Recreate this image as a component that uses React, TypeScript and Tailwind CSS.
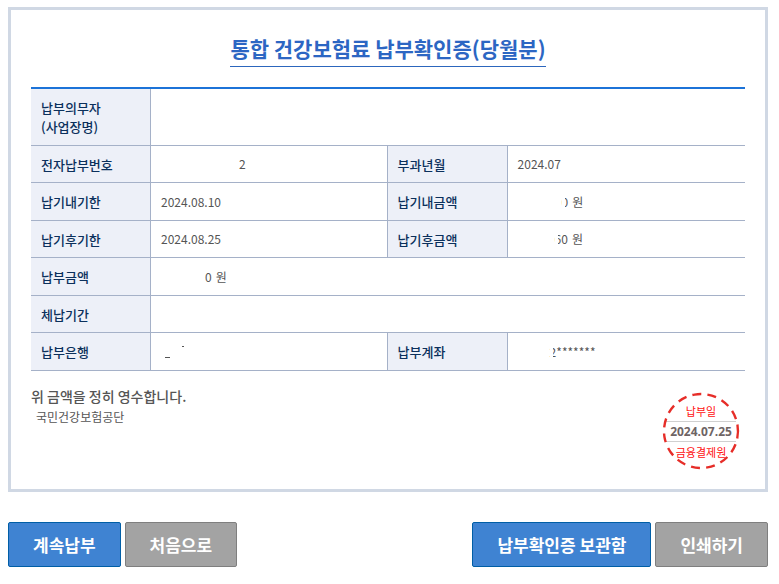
import type { ReactNode } from "react";
import clsx from "clsx";

const buttonStyles = {
  primary: "border-[#005ea6] bg-[#3f83d2]",
  neutral: "border-[#7f7f7f] bg-[#a3a3a3]",
};

function ActionButton({ variant, children }: { variant: keyof typeof buttonStyles; children: ReactNode }) {
  return (
    <button
      type="button"
      className={clsx("h-[45px] rounded-[2px] border px-6 text-[17px] font-bold text-white", buttonStyles[variant])}
    >
      {children}
    </button>
  );
}

function Label({ second, children }: { second?: boolean; children: ReactNode }) {
  return (
    <th
      scope="row"
      className={clsx(
        "border-r border-b border-[#a5b1c8] bg-[#edf0f8] px-[10px] text-left text-[13px] leading-[19px] font-medium text-[#0b305c]",
        second && "border-l",
      )}
    >
      {children}
    </th>
  );
}

function Value({ wide, children }: { wide?: boolean; children?: ReactNode }) {
  return (
    <td colSpan={wide ? 3 : 1} className="border-b border-[#a5b1c8] px-[10px] text-[12px] leading-[18px] text-[#555]">
      {children}
    </td>
  );
}

// Digit whose left half is hidden by the privacy mask
function MaskedDigit({ children }: { children: ReactNode }) {
  return (
    <span className="relative inline-block">
      {children}
      <span className="absolute inset-y-0 left-0 w-[3px] bg-white" />
    </span>
  );
}

const dashes = "14 6 " + "9 6.18 ".repeat(14);

function Stamp() {
  return (
    <div className="relative grid h-[78px] w-[78px] shrink-0 place-items-center text-center text-[11px] text-[#ff1010]">
      <svg className="absolute inset-0" width="78" height="78" viewBox="0 0 78 78" fill="none" aria-hidden="true">
        <circle
          cx="39"
          cy="39"
          r="37"
          stroke="#e62d28"
          strokeWidth="2.4"
          strokeDasharray={dashes}
          transform="rotate(-10 39 39)"
        />
      </svg>
      <div className="w-[70px] leading-[20px]">
        <p>납부일</p>
        <p className="border-y border-[#d0d0d0] font-['Open_Sans'] text-[12px] leading-[19px] font-bold text-[#6e6464]">
          2024.07.25
        </p>
        <p>금융결제원</p>
      </div>
    </div>
  );
}

export default function App() {
  return (
    <main className="bg-white pt-[7px] pr-[11px] pb-4 pl-2 font-['Noto_Sans_CJK_KR',sans-serif] text-[#555]">
      <section className="border-[3px] border-[#d0d8e4] px-5 pt-[22px] pb-[19px]">
        <div className="text-center">
          <h1 className="inline-block border-b border-[#2c66bd] pb-[2px] text-[21px] leading-[32px] font-bold text-[#2c66c3]">
            통합 건강보험료 납부확인증(당월분)
          </h1>
        </div>

        <table className="mt-5 w-full table-fixed border-separate border-spacing-0 border-t-2 border-[#1c73d8]">
          <colgroup>
            <col className="w-[120px]" />
            <col className="w-[33%]" />
            <col className="w-[121px]" />
            <col />
          </colgroup>
          <tbody>
            <tr className="h-[57px]">
              <Label>
                납부의무자
                <br />
                (사업장명)
              </Label>
              <Value wide />
            </tr>
            <tr className="h-[37px]">
              <Label>전자납부번호</Label>
              <Value>
                <span className="block pl-[78px]">2</span>
              </Value>
              <Label second>부과년월</Label>
              <Value>2024.07</Value>
            </tr>
            <tr className="h-[38px]">
              <Label>납기내기한</Label>
              <Value>2024.08.10</Value>
              <Label second>납기내금액</Label>
              <Value>
                <span className="flex gap-1 pl-11">
                  <MaskedDigit>0</MaskedDigit>원
                </span>
              </Value>
            </tr>
            <tr className="h-[37px]">
              <Label>납기후기한</Label>
              <Value>2024.08.25</Value>
              <Label second>납기후금액</Label>
              <Value>
                <span className="flex gap-1 pl-[37px]">
                  <span>
                    <MaskedDigit>6</MaskedDigit>0
                  </span>
                  원
                </span>
              </Value>
            </tr>
            <tr className="h-[38px]">
              <Label>납부금액</Label>
              <Value wide>
                <span className="flex gap-1 pl-11">
                  <span>0</span>원
                </span>
              </Value>
            </tr>
            <tr className="h-[37px]">
              <Label>체납기간</Label>
              <Value wide />
            </tr>
            <tr className="h-[38px]">
              <Label>납부은행</Label>
              <Value>
                <span className="flex h-3 items-end gap-3 pl-1">
                  <span className="h-px w-[5px] bg-[#555]" />
                  <span className="h-px w-[2px] self-start bg-[#555]" />
                </span>
              </Value>
              <Label second>납부계좌</Label>
              <Value>
                <span className="block pl-8">
                  <MaskedDigit>2</MaskedDigit>*******
                </span>
              </Value>
            </tr>
          </tbody>
        </table>

        <div className="mt-[15px] flex justify-between">
          <div>
            <p className="text-[14px] leading-[20px] font-medium">위 금액을 정히 영수합니다.</p>
            <p className="pl-[5px] text-[12px] leading-[22px]">국민건강보험공단</p>
          </div>
          <div className="pt-[6px] pr-[5px]">
            <Stamp />
          </div>
        </div>
      </section>

      <div className="mt-[30px] flex justify-between">
        <div className="flex gap-1">
          <ActionButton variant="primary">계속납부</ActionButton>
          <ActionButton variant="neutral">처음으로</ActionButton>
        </div>
        <div className="flex gap-1">
          <ActionButton variant="primary">납부확인증 보관함</ActionButton>
          <ActionButton variant="neutral">인쇄하기</ActionButton>
        </div>
      </div>
    </main>
  );
}
